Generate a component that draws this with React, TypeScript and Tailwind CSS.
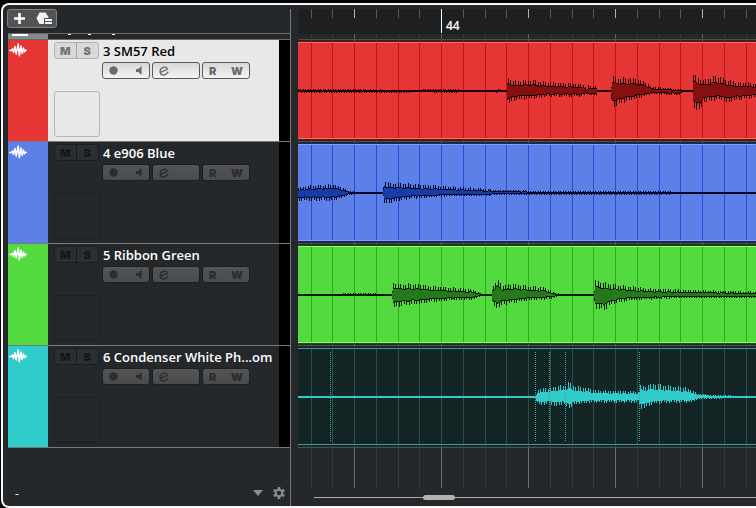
import React, { useState } from 'react';
import clsx from 'clsx';

// [x, height above the centre line, height below it]
type Envelope = [number, number, number][];

interface Track {
  name: string;
  strip: string;
  fill: string;
  edge: string;
  shade: string;
  grid: string;
  wave: string;
  outline: string;
  envelope: Envelope;
  slices?: number[];
}

const TRACKS: Track[] = [
  {
    name: '3 SM57 Red',
    strip: 'bg-[#e63535]',
    fill: '#e63535',
    edge: '#f56a6a',
    shade: '#6b1414',
    grid: '#c41414',
    wave: '#861010',
    outline: '#1c0404',
    envelope: [
      [0, 2, 1], [8, 2, 2], [30, 2, 2], [110, 1, 2], [113, 0, 0], [122, 0, 0], [125, 2, 1], [160, 2, 2],
      [162, 0, 0], [195, 0, 0], [198, 2, 2], [202, 2, 1], [203, 0, 0], [208, 0, 0], [209, 12, 12],
      [214, 10, 10], [218, 9, 8], [233, 10, 7], [250, 8, 5], [285, 6, 5], [288, 2, 3], [290, 5, 4],
      [298, 4, 4], [299, 0, 0], [312, 0, 0], [314, 14, 15], [318, 12, 13], [333, 12, 8], [346, 9, 5],
      [353, 4, 3], [380, 2, 4], [385, 1, 1], [394, 0, 0], [395, 15, 14], [402, 11, 19], [405, 10, 10],
      [418, 14, 8], [424, 12, 8], [428, 10, 11], [440, 8, 8], [458, 7, 6], [1400, 1, 1],
    ],
  },
  {
    name: '4 e906 Blue',
    strip: 'bg-[#5d80e8]',
    fill: '#5d80e8',
    edge: '#7e9dff',
    shade: '#1a2a5c',
    grid: '#2450d8',
    wave: '#163ca8',
    outline: '#020824',
    envelope: [
      [0, 5, 7], [15, 7, 7], [34, 8, 7], [42, 6, 5], [50, 2, 2], [60, 1, 1], [63, 0, 0], [84, 0, 0],
      [86, 11, 10], [92, 9, 9], [102, 9, 7], [115, 8, 5], [150, 6, 3], [170, 5, 3], [200, 3, 2],
      [240, 2, 2], [330, 2, 2], [400, 1, 1], [1400, 1, 1],
    ],
  },
  {
    name: '5 Ribbon Green',
    strip: 'bg-[#53da3e]',
    fill: '#53da3e',
    edge: '#86fa70',
    shade: '#17500f',
    grid: '#2fa822',
    wave: '#26781c',
    outline: '#041802',
    envelope: [
      [0, 0, 0], [42, 0, 0], [45, 2, 1], [78, 2, 1], [80, 0, 0], [93, 0, 0], [95, 12, 12], [100, 10, 10],
      [120, 10, 8], [135, 8, 6], [150, 7, 5], [175, 5, 4], [182, 2, 1], [185, 0, 0], [193, 0, 0],
      [194, 8, 10], [199, 14, 12], [204, 9, 9], [215, 10, 7], [230, 8, 5], [247, 7, 4], [254, 3, 3],
      [262, 1, 1], [288, 0, 0], [295, 0, 0], [297, 13, 12], [305, 11, 14], [315, 10, 8], [330, 8, 5],
      [350, 6, 4], [380, 5, 3], [420, 4, 3], [458, 3, 3], [1400, 0, 0],
    ],
  },
  {
    name: '6 Condenser White Ph...om',
    strip: 'bg-[#30cccc]',
    fill: '#142525',
    edge: '#3f9797',
    shade: '#12292a',
    grid: '#2b504e',
    wave: '#30cccc',
    outline: '#30cccc',
    envelope: [
      [0, 0, 0], [237, 0, 0], [239, 7, 7], [245, 8, 7], [252, 8, 6], [258, 10, 9], [264, 10, 6],
      [270, 13, 10], [276, 10, 7], [290, 8, 5], [300, 6, 5], [340, 5, 5], [342, 11, 10], [346, 10, 10],
      [355, 12, 6], [370, 10, 5], [385, 9, 5], [392, 7, 5], [400, 3, 2], [415, 2, 2], [430, 2, 1],
      [445, 0, 0], [1400, 0, 0],
    ],
    slices: [32, 237, 251, 267, 341],
  },
];

// Quarter beats, the bar line of bar 44 is at 143
const GRID = Array.from({ length: 80 }, (_, i) => ({
  x: Math.round(143 + (i - 6) * 21.75),
  major: (i - 6) % 4 === 0,
  bar: i === 6,
}));

// One pixel wide columns. The body is the inner part, the spikes stick out of it.
const wavePaths = (envelope: Envelope, centre: number) => {
  let spikes = '';
  let body = '';
  let k = 0;
  const end = envelope[envelope.length - 1][0];
  for (let x = 0; x < end; x++) {
    while (envelope[k + 1][0] <= x) k++;
    const [x0, u0, d0] = envelope[k];
    const [x1, u1, d1] = envelope[k + 1];
    const t = (x - x0) / (x1 - x0);
    const swell = 0.98 + 0.08 * Math.sin(x * 0.7);
    const up = (u0 + (u1 - u0) * t) * swell;
    const down = (d0 + (d1 - d0) * t) * swell;
    const phase = x % 5;
    const top = Math.round(up * (phase === 0 || phase === 2 ? 1.1 : 0.66));
    const low = Math.round(down * (phase === 1 || phase === 3 ? 1.1 : 0.7));
    if (top + low > 0) {
      spikes += `M${x} ${centre - top}h1V${centre + low}h-1Z`;
    }
    const inTop = Math.round(up * 0.66) - 1;
    const inLow = Math.round(down * 0.7) - 1;
    if (inTop > 0 || inLow > 0) {
      body += `M${x} ${centre - Math.max(inTop, 0)}h1V${centre + Math.max(inLow, 0)}h-1Z`;
    }
  }
  return { spikes, body };
};

const WaveIcon = () => (
  <svg viewBox="0 0 18 14" className="h-[14px] w-[18px]" fill="none" stroke="#fff" strokeWidth="1.5" strokeLinejoin="round" strokeLinecap="round">
    <path d="M.8 7.500H2.200L3.500 6L4.500 9.500L6 3.500L7.200 11L9.200.9L10.300 12.800L12 3L13.200 10.500L14.500 5L15.500 8.800L16.400 7.300H17.300" />
  </svg>
);

const GearIcon = () => (
  <svg viewBox="0 0 12 12" className="size-[12px]" fill="none" stroke="currentColor">
    <circle cx="6" cy="6" r="3.3" strokeWidth="2" />
    <path
      d="M6 0V2.200M6 9.800V12M.8 3L2.700 4.100M9.300 7.900L11.200 9M.8 9L2.700 7.900M9.300 4.100L11.200 3"
      strokeWidth="2.600"
    />
  </svg>
);

const TrackButtons: React.FC<{ selected: boolean }> = ({ selected }) => {
  const group = clsx(
    'flex h-[17px] w-12 items-center justify-between rounded-[3px] border px-1.5',
    selected
      ? 'border-[#58595b] bg-linear-to-b from-[#d8d8d8] to-[#f4f4f4] text-[#6c6c6c]'
      : 'border-[#1d2022] bg-linear-to-b from-[#525456] to-[#494b4d] text-[#2b2d2f]'
  );
  return (
    <div className="flex gap-0.5">
      <div className={group}>
        <button type="button" aria-label="Record enable">
          <svg viewBox="0 0 9 9" className="size-[9px]" fill="currentColor"><circle cx="4.5" cy="4.5" r="4.2" /></svg>
        </button>
        <button type="button" aria-label="Monitor">
          <svg viewBox="0 0 7 9" className="h-[9px] w-[7px]" fill="currentColor"><path d="M0 3H2.3L5.6 0V9L2.3 6H0Z" /></svg>
        </button>
      </div>
      <div className={group}>
        <button type="button" aria-label="Edit channel settings">
          <svg viewBox="0 0 10 10" className="size-[10px]" fill="none" stroke="currentColor" strokeWidth="1.4" strokeLinecap="round" strokeLinejoin="round">
            <path d="M2 6.200L8.300 3.400C8 1.500 6.300.8 4.700 1.200C2.400 1.800 .9 4 1.200 6.300C1.500 8.500 3.500 9.400 5.600 8.800C7 8.400 8.200 7.500 8.900 6.200" />
          </svg>
        </button>
      </div>
      <div className={clsx(group, 'font-[Inter] text-[11px] leading-3 font-black')}>
        <button type="button" aria-label="Read automation">R</button>
        <button type="button" aria-label="Write automation">W</button>
      </div>
    </div>
  );
};

interface TrackRowProps {
  track: Track;
  selected: boolean;
  onSelect: () => void;
}

const TrackRow: React.FC<TrackRowProps> = ({ track, selected, onSelect }) => (
  <li className="flex h-[102px] border-b border-[#77797b]" onClick={onSelect}>
    <div className={clsx('w-10 shrink-0 pt-[3px] pl-px', track.strip)}>
      <WaveIcon />
    </div>
    <div className={clsx('flex min-w-0 flex-1 gap-0.5 pl-1.5', selected ? 'bg-[#e8e8e8]' : 'bg-[#25282b]')}>
      <div className="flex w-[46px] shrink-0 flex-col justify-between pt-0.5 pb-1">
        <div
          className={clsx(
            'grid h-[17px] w-[45px] grid-cols-2 divide-x rounded-[3px] border font-[Inter] text-[11px] leading-3 font-black',
            selected
              ? 'divide-[#a4a4a4] border-[#b2b2b2] bg-[#d9d9d9] text-[#747474]'
              : 'divide-[#191b1d] border-[#1b1d1f] bg-[#2c2f31] text-[#141618]'
          )}
        >
          <button type="button" aria-label="Mute">M</button>
          <button type="button" aria-label="Solo">S</button>
        </div>
        <div className={clsx('size-[46px] rounded-[3px] border', selected ? 'border-[#b6b6b6]' : 'border-[#1d1f21]')} />
      </div>
      <div className="min-w-0 flex-1">
        <h2
          className={clsx(
            'h-[22px] truncate pl-px font-["Open_Sans",sans-serif] text-[13px] leading-[22px] font-semibold',
            selected ? 'text-black' : 'text-white'
          )}
        >
          {track.name}
        </h2>
        <TrackButtons selected={selected} />
      </div>
    </div>
    <div className="w-[11px] shrink-0 bg-black" />
  </li>
);

const Lane: React.FC<{ track: Track }> = ({ track }) => {
  const { spikes, body } = wavePaths(track.envelope, 51);
  return (
    <svg className="block h-[102px] w-full" shapeRendering="crispEdges">
      <rect width="100%" height="102" fill="#25282b" />
      {GRID.map(({ x, major }) => (
        <rect key={x} x={x} width="1" height="102" fill={major ? '#5d5f61' : '#393c3e'} />
      ))}
      <rect y="1" width="100%" height="99" fill={track.shade} />
      <rect y="2" width="100%" height="97" fill={track.edge} />
      <rect y="3" width="100%" height="95" fill={track.fill} />
      {GRID.map(({ x }) => (
        <rect key={x} x={x} y="3" width="1" height="95" fill={track.grid} />
      ))}
      <rect y="50" width="100%" height="2" fill={track.outline} />
      <path d={spikes} fill={track.outline} />
      <path d={body} fill={track.wave} />
      {track.slices?.map(x => (
        <line key={x} x1={x + 0.5} x2={x + 0.5} y1="6" y2="95" stroke="#43a3a0" strokeDasharray="1 1" />
      ))}
      <rect y="101" width="100%" height="1" fill="#4c4e50" />
    </svg>
  );
};

const Ruler = () => (
  <div className="relative h-[25px] bg-[#1d1f21]">
    <svg className="block h-full w-full" shapeRendering="crispEdges">
      {GRID.map(({ x, major, bar }) => (
        <rect key={x} x={x} width="1" height={bar ? 24 : 9} fill={bar ? '#fff' : major ? '#b0b1b2' : '#55585a'} />
      ))}
    </svg>
    <span className='absolute top-[9px] left-[148px] font-["Open_Sans",sans-serif] text-xs leading-4 font-semibold text-white'>
      44
    </span>
  </div>
);

export default function App() {
  const [selected, setSelected] = useState(0);

  return (
    <div className="h-screen bg-[#060606] pt-[3px] pl-px">
      <div className="flex h-full gap-[7px] overflow-hidden rounded-l-lg border-2 border-r-0 border-[#f6f6f6] bg-[#25282b] pt-1 pl-[5px]">
        <section className="flex w-[283px] shrink-0 flex-col border-r border-[#77797b]">
          <div className="-ml-px flex h-6 items-start">
            <div className="flex h-[19px] w-[50px] items-center justify-between rounded-[3px] border border-[#7e8082] bg-[#505254] pr-[3px] pl-1.5">
              <button type="button" aria-label="Add track">
                <svg viewBox="0 0 11 11" className="size-[11px]" fill="#fff"><path d="M4.200 0H6.800V4.200H11V6.800H6.800V11H4.200V6.800H0V4.200H4.200Z" /></svg>
              </button>
              <button type="button" aria-label="Track presets">
                <svg viewBox="0 0 17 13" className="h-[13px] w-[17px]">
                  <path d="M3.500.5H9.500L12.500 5V6H8V12H3.500L.5 6.200Z" fill="#f2f2f2" />
                  <path d="M9 8H16M9 11H16" stroke="#f2f2f2" strokeWidth="1.800" />
                </svg>
              </button>
            </div>
          </div>
          {/* bottom edge of the track that is scrolled out */}
          <div className="flex h-[7px] border-y border-[#66686a]">
            <div className="w-10 shrink-0 bg-[#88898b] pl-1">
              <div className="h-0.5 w-4 bg-white" />
            </div>
            <div className="flex gap-[17px] pl-5">
              <div className="h-px w-[3px] bg-white" />
              <div className="h-px w-[3px] bg-white" />
              <div className="ml-1 h-px w-[3px] bg-white" />
            </div>
          </div>
          <ul>
            {TRACKS.map((track, i) => (
              <TrackRow key={track.name} track={track} selected={selected === i} onSelect={() => setSelected(i)} />
            ))}
          </ul>
          <footer className="mt-auto flex h-[26px] items-center pr-[5px] pl-[7px] text-[#8b8d8f]">
            <span className='flex-1 pt-0.5 font-["Open_Sans",sans-serif] text-xs text-white'>-</span>
            <button type="button" aria-label="Track list menu" className="mr-[10px]">
              <svg viewBox="0 0 10 6" className="h-1.5 w-2.5" fill="currentColor"><path d="M0 0H10L5 6Z" /></svg>
            </button>
            <button type="button" aria-label="Track list settings">
              <GearIcon />
            </button>
          </footer>
        </section>

        <section className="flex min-w-0 flex-1 flex-col">
          <Ruler />
          <svg className="block h-[5px] w-full shrink-0" shapeRendering="crispEdges">
            {GRID.map(({ x, major }) => (
              <rect key={x} x={x} width="1" height="5" fill={major ? '#5d5f61' : '#393c3e'} />
            ))}
          </svg>
          <div className="h-px shrink-0 bg-[#4c4e50]" />
          {TRACKS.map(track => (
            <Lane key={track.name} track={track} />
          ))}
          <svg className="block w-full flex-1" shapeRendering="crispEdges">
            {GRID.map(({ x, major }) => (
              <rect key={x} x={x} width="1" height="100%" fill={major ? '#6a6c6e' : '#36393c'} />
            ))}
          </svg>
          <div className="flex h-[18px] shrink-0 items-center pl-4">
            <div className="h-px w-[109px] bg-[#a9a9ab]" />
            <div className="h-[5px] w-8 rounded-full bg-[#b3b1b4]" />
            <div className="h-px flex-1 bg-[#a9a9ab]" />
          </div>
        </section>
      </div>
    </div>
  );
}
